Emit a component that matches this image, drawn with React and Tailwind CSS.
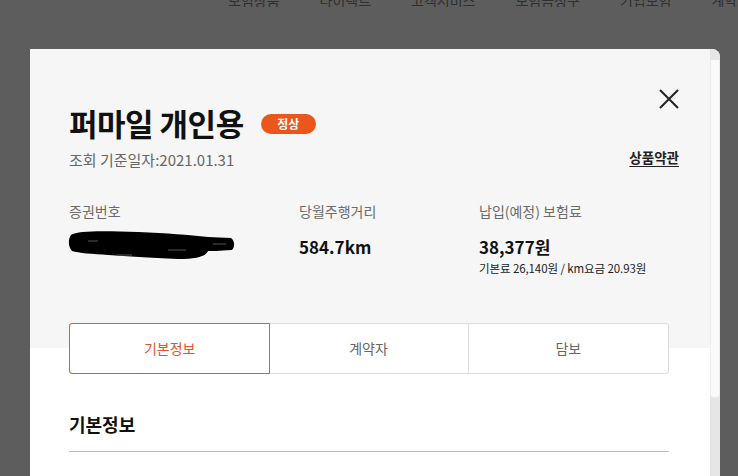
import React from 'react';

const navItems = ['보험상품', '다이렉트', '고객서비스', '보험금청구', '기업보험', '계약조회'];

const Redacted = () => (
  <svg width="168" height="32" viewBox="0 0 168 32" className="block">
    <path
      d="M3 6 C10 1 40 2 70 3 C100 4 120 6 140 8 L163 9 C167 12 167 18 164 21 C150 22 145 22 140 22 C138 27 130 30 110 30 C80 29 60 27 40 26 C25 25 10 24 4 22 C0 18 0 10 3 6 Z"
      fill="#000"
    />
    <path d="M20 12 L30 12 M48 26 L64 26 M100 21 L118 21 M145 15 L158 15" stroke="#555" strokeWidth="1" />
  </svg>
);

const InfoCol = ({ label, children, className = '' }) => (
  <div className={`flex flex-col ${className}`}>
    <span className="text-[14px] leading-[20px] text-[#6b6b6b]">{label}</span>
    <div className="mt-[14px]">{children}</div>
  </div>
);

export default function App() {
  return (
    <div
      className="relative w-[738px] h-[476px] overflow-hidden bg-[#5d5d5d]"
      style={{ fontFamily: '"Noto Sans CJK KR", "Noto Sans", sans-serif' }}
    >
      {/* page nav behind overlay, mostly cut off at the top */}
      <div className="flex h-[7px] items-end overflow-hidden pl-[228px]">
        <div className="flex gap-[40px] text-[14px] leading-[18px] text-[#2f2f2f] -mb-[2px]">
          {navItems.map((n) => (
            <span key={n} className="whitespace-nowrap">{n}</span>
          ))}
        </div>
      </div>

      <div className="ml-[30px] mt-[42px] flex h-[430px] w-[690px] overflow-hidden rounded-tr-[8px] bg-white">
        <div className="flex-1">
          {/* gray summary panel */}
          <div className="bg-[#f6f6f6] pl-[39px] pr-[31px] pt-[53px] h-[299px]">
            <div className="flex items-start justify-between">
              <div className="flex items-center gap-[17px]">
                <h1 className="text-[31px] leading-[42px] font-bold text-[#111] tracking-[-0.5px]">퍼마일 개인용</h1>
                <span className="mt-[2px] flex h-[20px] w-[55px] items-center justify-center rounded-full bg-[#ea561c] text-[12px] font-bold text-white">
                  정상
                </span>
              </div>
              <svg width="22" height="22" viewBox="0 0 22 22" className="mt-[-14px] mr-[-1px]">
                <path d="M2 2 L20 20 M20 2 L2 20" stroke="#222" strokeWidth="2" />
              </svg>
            </div>
            <div className="mt-[5px] flex items-center justify-between">
              <span className="text-[15px] leading-[22px] text-[#666]">조회 기준일자:2021.01.31</span>
              <a className="text-[13.5px] font-bold text-[#222] underline underline-offset-[3px] -mt-[5px]">상품약관</a>
            </div>

            <div className="mt-[30px] flex">
              <InfoCol label="증권번호" className="w-[230px]">
                <div className="-ml-[1px] -mt-[6px]">
                  <Redacted />
                </div>
              </InfoCol>
              <InfoCol label="당월주행거리" className="w-[180px]">
                <span className="text-[17px] font-bold leading-[24px] text-[#111]">584.7km</span>
              </InfoCol>
              <InfoCol label="납입(예정) 보험료">
                <span className="block text-[17px] font-bold leading-[24px] text-[#111]">38,377원</span>
                <span className="block text-[11.5px] leading-[18px] tracking-[-0.1px] text-[#222]">기본료 26,140원 / km요금 20.93원</span>
              </InfoCol>
            </div>
          </div>

          {/* tabs */}
          <div className="ml-[39px] mr-[41px] -mt-[25px] grid h-[51px] grid-cols-3 rounded-[3px] border border-[#dcdcdc] bg-white text-[14px]">
            <div className="-m-[1px] flex items-center justify-center rounded-l-[3px] border border-[#e25a2c] text-[#e0562a]">
              기본정보
            </div>
            <div className="flex items-center justify-center border-r border-[#dcdcdc] text-[#666]">계약자</div>
            <div className="flex items-center justify-center text-[#666]">담보</div>
          </div>

          <div className="ml-[39px] mr-[41px] mt-[37px]">
            <h2 className="text-[18px] font-bold leading-[26px] text-[#111]">기본정보</h2>
            <div className="mt-[14px] h-px bg-[#bdbdbd]" />
          </div>
        </div>

        {/* scrollbar */}
        <div className="flex w-[10px] flex-col bg-[#e6e6e6]">
          <div className="mt-[11px] h-[338px] rounded-b-[4px] border-x border-b border-[#ececec] bg-[#fafafa]" />
        </div>
      </div>
    </div>
  );
}
